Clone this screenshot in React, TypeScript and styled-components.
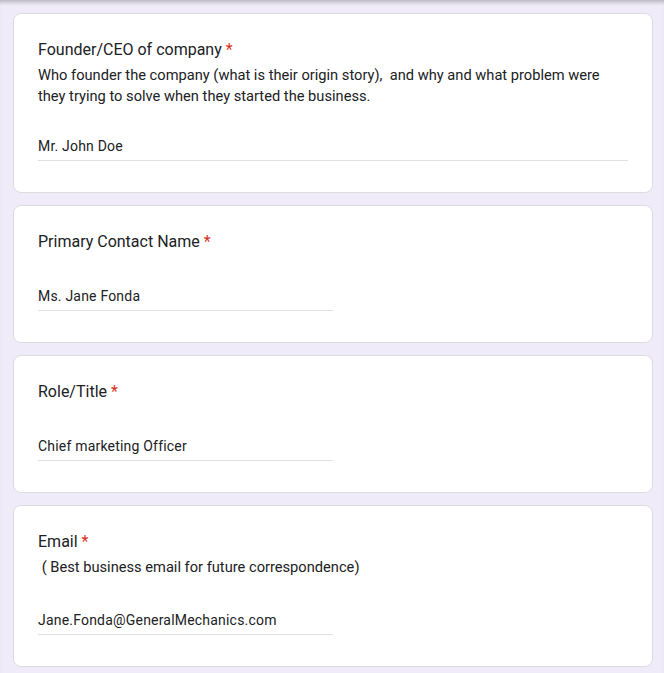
import styled, { createGlobalStyle } from 'styled-components';

const GlobalStyle = createGlobalStyle`
  html, body {
    margin: 0;
    padding: 0;
    background: #f0ebf8;
  }

  body {
    font-family: Roboto, "Noto Sans", Arial, sans-serif;
    color: #202124;
  }
`;

const Page = styled.div`
  box-shadow: inset 0 5px 4px -3px rgba(60, 64, 67, 0.35);
  box-sizing: border-box;
  display: flex;
  flex-direction: column;
  gap: 12px;
  min-height: 673px;
  padding: 13px 11px 13px 13px;
`;

const Card = styled.div`
  background: #fff;
  border: 1px solid #dadce0;
  border-radius: 8px;
  box-sizing: border-box;
  padding: 24px 22px 31px 24px;
  width: 640px;
`;

const Title = styled.div`
  font-size: 16px;
  line-height: 24px;

  .req {
    color: #d93025;
    margin-left: 4px;
  }
`;

const Description = styled.div`
  font-size: 11pt;
  line-height: 21px;
  margin-top: 3px;
  white-space: pre-wrap;
`;

const Field = styled.div<{ $full?: boolean }>`
  border-bottom: 1px solid #e0e0e0;
  font-size: 14px;
  letter-spacing: 0.2px;
  line-height: 20px;
  margin-top: ${({ $full }) => ($full ? '29px' : '32px')};
  padding-bottom: 4px;
  width: ${({ $full }) => ($full ? '590px' : '295px')};
`;

type Question = {
  title: string;
  description?: string;
  value: string;
  full?: boolean;
};

const questions: Question[] = [
  {
    title: 'Founder/CEO of company',
    description:
      'Who founder the company (what is their origin story),  and why and what problem were they trying to solve when they started the business.',
    value: 'Mr. John Doe',
    full: true,
  },
  { title: 'Primary Contact Name', value: 'Ms. Jane Fonda' },
  { title: 'Role/Title', value: 'Chief marketing Officer' },
  {
    title: 'Email',
    description: ' ( Best business email for future correspondence)',
    value: 'Jane.Fonda@GeneralMechanics.com',
  },
];

export default function App() {
  return (
    <>
      <GlobalStyle />
      <Page>
        {questions.map(({ title, description, value, full }) => (
          <Card key={title}>
            <Title>
              {title}
              <span className="req">*</span>
            </Title>
            {description && <Description>{description}</Description>}
            <Field $full={full}>{value}</Field>
          </Card>
        ))}
      </Page>
    </>
  );
}
